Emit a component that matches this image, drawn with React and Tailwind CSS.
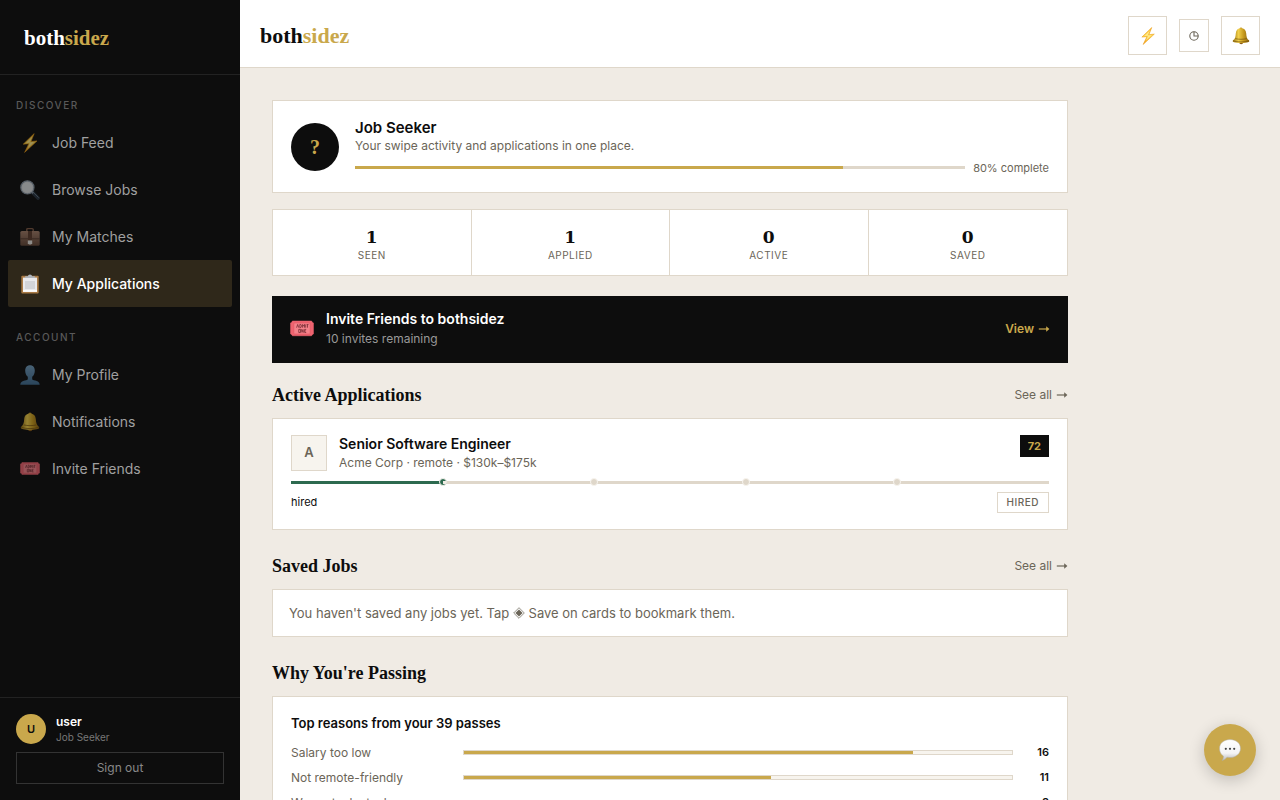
import React from "react";

function Bolt({ className }) {
  return (
    <svg viewBox="0 0 20 20" className={className} aria-hidden="true">
      <defs>
        <linearGradient id="bolt" x1="0" y1="0" x2="0" y2="1">
          <stop offset="0" stopColor="#ffb81c" />
          <stop offset="0.5" stopColor="#ffd84d" />
          <stop offset="1" stopColor="#f59a12" />
        </linearGradient>
      </defs>
      <path d="M14.2.6 3.2 11.2l5.600-.5L4.600 19.400 17 7.900l-6 .6z" fill="url(#bolt)" stroke="#e89a17" strokeWidth=".6" strokeLinejoin="round" />
      <path d="M12.400 3.400 6 10l4.200-.4-2.600 5.800L14 9l-4.400.4z" fill="#fff0a0" opacity=".75" />
    </svg>
  );
}

function Magnifier({ className }) {
  return (
    <svg viewBox="0 0 20 20" className={className} aria-hidden="true">
      <path d="m12.200 12.200 5.800 5.800" stroke="#26323e" strokeWidth="3.800" strokeLinecap="round" />
      <path d="m13.600 12.700 4.700 4.600" stroke="#60707f" strokeWidth="1" strokeLinecap="round" />
      <path d="m11.600 11.600 1.600 1.600" stroke="#8794a3" strokeWidth="2" />
      <circle cx="7.400" cy="7.400" r="6.600" fill="#d0d4d7" stroke="#8694a1" strokeWidth="1.200" />
      <circle cx="7.400" cy="7.400" r="5" fill="#dfe2e4" opacity=".6" />
    </svg>
  );
}

function Briefcase({ className }) {
  return (
    <svg viewBox="0 0 20 20" className={className} aria-hidden="true">
      <defs>
        <linearGradient id="case" x1="0" y1="0" x2="0" y2="1">
          <stop offset="0" stopColor="#a27d68" />
          <stop offset="1" stopColor="#634637" />
        </linearGradient>
      </defs>
      <path d="M6.800 4.500V2.600q0-1 1-1h4.400q1 0 1 1v1.900" fill="none" stroke="#805a46" strokeWidth="1.400" />
      <rect x=".3" y="4" width="19.400" height="14.800" rx="1.600" fill="url(#case)" />
      <path d="M.3 11.800h19.400" stroke="#4b3328" strokeWidth=".8" />
      <rect x="8" y="4" width="4" height="9" fill="#5c3d2e" />
      <path d="M7.800 13.600h4.400v2.700L11 17.600H9l-1.200-1.300z" fill="#e5e1dc" />
    </svg>
  );
}

function Clipboard({ className }) {
  return (
    <svg viewBox="0 0 20 20" className={className} aria-hidden="true">
      <rect x="1.300" y="1.800" width="17.400" height="17.800" rx="1" fill="#a97a45" />
      <path d="M3 3.600h14v14.200H3z" fill="#e9e9ec" />
      <path d="M5 7h10v8H5z" fill="#d3d4d8" />
      <path d="M3 16.200h14v1.600H3z" fill="#ffffff" />
      <path d="M5.200 3.900V2.300h2.600Q8.200.4 10 .4t2.200 1.900h2.600v1.600z" fill="#aeb4bc" />
    </svg>
  );
}

function Person({ className }) {
  return (
    <svg viewBox="0 0 20 20" className={className} aria-hidden="true">
      <defs>
        <linearGradient id="person" x1="0" y1="0" x2="0" y2="1">
          <stop offset="0" stopColor="#6f9abb" />
          <stop offset="1" stopColor="#3f6b8f" />
        </linearGradient>
      </defs>
      <path d="M10 .3C6.900.3 5.200 2.500 5.200 5.800c0 2.600 1 4.800 2.600 6v2.100c0 .7-.6 1-1.700 1.300C2.900 16 .5 16.500.3 19.700h19.400c-.2-3.200-2.600-3.700-5.800-4.500-1.100-.3-1.700-.6-1.700-1.300v-2.100c1.600-1.200 2.600-3.400 2.600-6C14.800 2.500 13.100.3 10 .3z" fill="url(#person)" />
    </svg>
  );
}

function Bell({ className }) {
  return (
    <svg viewBox="0 0 20 20" className={className} aria-hidden="true">
      <defs>
        <linearGradient id="bell" x1="0" y1="0" x2="1" y2="0">
          <stop offset="0" stopColor="#9a7410" />
          <stop offset="0.35" stopColor="#f1cf4a" />
          <stop offset="0.65" stopColor="#c79a1d" />
          <stop offset="1" stopColor="#8a620d" />
        </linearGradient>
      </defs>
      <circle cx="10" cy="2" r="1.500" fill="#c5982a" />
      <circle cx="10.200" cy="17" r="2.200" fill="#8c5c14" />
      <path d="M10 1.500c-3.500 0-5.600 2.200-5.800 5.600-.2 3.800-.8 5.900-3 7.700-.6.600-.6 1.500.3 1.900 4.600 1.400 12.400 1.400 17 0 .9-.4.900-1.300.3-1.900-2.200-1.800-2.800-3.900-3-7.700C15.600 3.700 13.500 1.500 10 1.500z" fill="url(#bell)" />
      <path d="M1.300 15.400c4.900 1.600 12.500 1.600 17.400 0M3.600 12.900c4 1 8.800 1 12.800 0" fill="none" stroke="#6e4c0b" strokeWidth=".7" />
    </svg>
  );
}

function Ticket({ className }) {
  return (
    <svg viewBox="0 0 20 20" className={className} aria-hidden="true">
      <path d="M2 3.400h16q.2 1.200 1.500 1.500v9.200q-1.300.3-1.500 1.500H2q-.2-1.200-1.500-1.500V4.900Q1.800 4.600 2 3.400z" fill="#ef6470" stroke="#ef6470" strokeWidth=".5" strokeLinejoin="round" />
      <rect x="3.200" y="5" width="13.600" height="9.200" rx=".6" fill="#f5828a" stroke="#e25563" strokeWidth=".5" />
      <path d="m5.500 8.900.9-2.700.9 2.700m.9-2.700v2.600h.8l.5-.6V6.800l-.5-.6zm2.300 2.700V6.200l.8 1.400.8-1.400v2.700m1-2.700v2.700m.8-2.600h1.500m-.8 0v2.600M7.300 10.300h1.500v2.600H7.300zm2.500 2.600v-2.600l1.200 2.600v-2.600m2.500 0h-1.300v2.600h1.300m-1.300-1.300h1" fill="none" stroke="#7c3038" strokeWidth=".7" />
    </svg>
  );
}

function Speech({ className }) {
  return (
    <svg viewBox="0 0 22 22" className={className} aria-hidden="true">
      <defs>
        <linearGradient id="speech" x1="0" y1="0" x2="0" y2="1">
          <stop offset="0" stopColor="#ffffff" />
          <stop offset="0.65" stopColor="#f4f4f4" />
          <stop offset="1" stopColor="#b9b9bb" />
        </linearGradient>
      </defs>
      <path d="M11 .6c6 0 10.500 3.600 10.500 8.800S17 18.500 11 18.500c-1 0-2-.1-3-.3-1 1.400-2.800 2.900-4.900 3.300 1-1.300 1.500-2.900 1.300-4.400C2 15.500.5 12.800.5 9.400.5 4.200 5 .6 11 .6z" fill="url(#speech)" stroke="#b3aea2" strokeWidth=".5" />
      <circle cx="6.800" cy="9.800" r="1.100" fill="#444" />
      <circle cx="11" cy="9.800" r="1.100" fill="#444" />
      <circle cx="15.200" cy="9.800" r="1.100" fill="#444" />
    </svg>
  );
}

function ClockGlyph({ className }) {
  return (
    <svg viewBox="0 0 10 10" className={className} fill="none" stroke="currentColor" strokeWidth="1.100" aria-hidden="true">
      <circle cx="5" cy="5" r="4.200" />
      <path d="M5 .8V5h4.200" />
    </svg>
  );
}

function Diamond() {
  return (
    <svg viewBox="0 0 12 12" className="inline-block size-3 align-[-1px]" aria-hidden="true">
      <path d="M6 .7 11.300 6 6 11.300.7 6z" fill="none" stroke="currentColor" strokeWidth=".7" />
      <path d="M6 2.400 9.600 6 6 9.600 2.400 6z" fill="currentColor" />
    </svg>
  );
}

function Arrow() {
  return (
    <svg viewBox="0 0 12 8" className="h-2 w-3" aria-hidden="true">
      <path d="M.8 4h8.400" fill="none" stroke="currentColor" strokeWidth="1.200" />
      <path d="M8.200 1.200 11.400 4 8.200 6.800z" fill="currentColor" />
    </svg>
  );
}

function Logo({ className }) {
  return (
    <a href="#home" className={`font-['Liberation_Serif',serif] font-bold ${className}`}>
      both<span className="text-[#c9a84c]">sidez</span>
    </a>
  );
}

function NavGroup({ title, items }) {
  return (
    <div>
      <h2 className="px-4 text-[10px] leading-4 font-medium tracking-[1.5px] text-[#595959] uppercase">{title}</h2>
      <ul className="mt-[6px] px-2">
        {items.map(({ label, Icon, active }) => (
          <li key={label}>
            <a
              href={`#${label}`}
              aria-current={active ? "page" : undefined}
              className={
                active
                  ? "flex h-[47px] items-center gap-3 rounded-xs bg-[#2f281a] px-3 text-sm font-medium text-white"
                  : "flex h-[47px] items-center gap-3 rounded-xs px-3 text-sm text-[#a0a0a0]"
              }
            >
              <Icon className={active ? "size-5" : "size-5 opacity-60"} />
              {label}
            </a>
          </li>
        ))}
      </ul>
    </div>
  );
}

const discover = [
  { label: "Job Feed", Icon: Bolt },
  { label: "Browse Jobs", Icon: Magnifier },
  { label: "My Matches", Icon: Briefcase },
  { label: "My Applications", Icon: Clipboard, active: true },
];

const account = [
  { label: "My Profile", Icon: Person },
  { label: "Notifications", Icon: Bell },
  { label: "Invite Friends", Icon: Ticket },
];

function Sidebar() {
  return (
    <aside className="flex w-60 shrink-0 flex-col bg-[#0d0d0d]">
      <div className="flex h-[75px] items-center border-b border-[#222] px-6 pt-1">
        <Logo className="text-[21px] text-white" />
      </div>
      <nav className="flex grow flex-col gap-[22px] pt-[22px]">
        <NavGroup title="Discover" items={discover} />
        <NavGroup title="Account" items={account} />
      </nav>
      <div className="border-t border-[#222] p-4">
        <div className="flex items-center gap-[10px]">
          <div className="flex size-[30px] items-center justify-center rounded-full bg-[#c9a84c] text-[11px] font-semibold text-[#0d0d0d]">U</div>
          <div>
            <p className="text-xs leading-4 font-semibold text-white">user</p>
            <p className="text-[10px] leading-[14px] text-[#777]">Job Seeker</p>
          </div>
        </div>
        <button type="button" className="mt-2 h-8 w-full border border-[#333] text-xs text-[#888]">
          Sign out
        </button>
      </div>
    </aside>
  );
}

const stats = [
  ["1", "Seen"],
  ["1", "Applied"],
  ["0", "Active"],
  ["0", "Saved"],
];

const reasons = [
  { label: "Salary too low", count: 16, share: 82 },
  { label: "Not remote-friendly", count: 11, share: 56 },
  { label: "Wrong tech stack", count: 8, share: 41 },
];

function SectionHead({ title, link }) {
  return (
    <div className="mb-[10px] flex h-[26px] items-center justify-between">
      <h2 className="font-['Liberation_Serif',serif] text-lg font-bold">{title}</h2>
      {link && (
        <a href="#all" className="flex items-center gap-1 text-xs text-[#6b6558]">
          See all <Arrow />
        </a>
      )}
    </div>
  );
}

export default function App() {
  return (
    <div className="flex h-screen overflow-hidden bg-[#f0ebe4] font-['Inter',sans-serif] text-[#0d0d0d]">
      <Sidebar />
      <div className="flex min-w-0 grow flex-col">
        <header className="flex h-[68px] shrink-0 items-center justify-between border-b border-[#dfd7ca] bg-white px-5 pt-1">
          <Logo className="text-[22px] text-[#0d0d0d]" />
          <div className="flex items-center gap-3">
            <button type="button" aria-label="Job feed" className="flex size-[39px] items-center justify-center border border-[#dfd7ca]">
              <Bolt className="size-[18px]" />
            </button>
            <button type="button" aria-label="History" className="flex h-[33px] w-[30px] items-center justify-center border border-[#dfd7ca] text-[#6b6558]">
              <ClockGlyph className="size-[10px]" />
            </button>
            <button type="button" aria-label="Notifications" className="flex size-[39px] items-center justify-center border border-[#dfd7ca]">
              <Bell className="size-[18px]" />
            </button>
          </div>
        </header>

        <main className="min-h-0 grow overflow-y-auto [scrollbar-width:none]">
          <div className="max-w-[860px] p-8">
            <section className="flex h-[93px] items-center gap-4 border border-[#dfd7ca] bg-white px-[18px]">
              <div className="flex size-12 shrink-0 items-center justify-center rounded-full bg-[#0d0d0d] font-['Liberation_Serif',serif] text-xl font-bold text-[#c9a84c]">?</div>
              <div className="grow">
                <h1 className="text-[15px] leading-5 font-semibold">Job Seeker</h1>
                <p className="text-xs leading-4 text-[#6b6558]">Your swipe activity and applications in one place.</p>
                <div className="mt-[6px] flex items-center gap-2">
                  <div className="h-[3px] grow bg-[#dfd7ca]">
                    <div className="h-full w-4/5 bg-[#c9a84c]" />
                  </div>
                  <span className="text-[11px] leading-4 text-[#6b6558]">80% complete</span>
                </div>
              </div>
            </section>

            <section className="mt-4 grid grid-cols-4 divide-x divide-[#dfd7ca] border border-[#dfd7ca] bg-white">
              {stats.map(([value, label]) => (
                <div key={label} className="flex h-[65px] flex-col items-center justify-center pt-1">
                  <span className="font-['DejaVu_Serif',serif] text-[17px] leading-5 font-bold">{value}</span>
                  <span className="text-[10px] leading-4 tracking-wider text-[#6b6558] uppercase">{label}</span>
                </div>
              ))}
            </section>

            <section className="mt-5 flex h-[67px] items-center gap-3 bg-[#0d0d0d] px-[18px] pb-[2px]">
              <Ticket className="size-6" />
              <div className="grow">
                <h2 className="text-sm leading-5 font-semibold text-white">Invite Friends to bothsidez</h2>
                <p className="text-xs leading-5 text-[#999]">10 invites remaining</p>
              </div>
              <a href="#invites" className="flex items-center gap-1 text-xs font-semibold text-[#c9a84c]">
                View <Arrow />
              </a>
            </section>

            <section className="mt-[19px]">
              <SectionHead title="Active Applications" link />
              <article className="h-28 border border-[#dfd7ca] bg-white px-[18px] py-4">
                <div className="flex items-start gap-3">
                  <div className="flex size-9 shrink-0 items-center justify-center border border-[#dfd7ca] bg-[#f7f4ee] text-[13px] font-semibold text-[#6b6558]">A</div>
                  <div className="h-9 grow">
                    <h3 className="text-sm leading-[18px] font-semibold">Senior Software Engineer</h3>
                    <p className="text-xs leading-5 text-[#6b6558]">Acme Corp · remote · $130k–$175k</p>
                  </div>
                  <span className="bg-[#0d0d0d] px-2 text-[11px] leading-[22px] font-bold text-[#c9a84c]">72</span>
                </div>
                <div className="mt-[10px] flex">
                  {[0, 1, 2, 3, 4].map((step) => (
                    <div key={step} className={step === 0 ? "relative h-[3px] grow bg-[#2d6a4f]" : "relative h-[3px] grow bg-[#dfd7ca]"}>
                      {step < 4 && (
                        <span
                          className={
                            step === 0
                              ? "absolute -top-[3px] -right-1 z-10 size-2 rounded-full border border-[#f7f4ee] bg-[#2d6a4f]"
                              : "absolute -top-[3px] -right-1 z-10 size-2 rounded-full border border-[#f7f4ee] bg-[#dfd7ca]"
                          }
                        >
                          {step === 0 && <span className="absolute top-[2px] right-0 h-[3px] w-[3px] bg-[#f0ebe4]" />}
                        </span>
                      )}
                    </div>
                  ))}
                </div>
                <div className="mt-2 flex items-center justify-between">
                  <span className="text-[11px]">hired</span>
                  <span className="border border-[#dfd7ca] px-[9px] text-[10px] leading-[19px] font-medium tracking-wider text-[#6b6558]">HIRED</span>
                </div>
              </article>
            </section>

            <section className="mt-[23px]">
              <SectionHead title="Saved Jobs" link />
              <p className="border border-[#dfd7ca] bg-white px-4 py-[13px] text-[13px] leading-5 text-[#6b6558]">
                You haven't saved any jobs yet. Tap <Diamond /> Save on cards to bookmark them.
              </p>
            </section>

            <section className="mt-[23px]">
              <SectionHead title="Why You're Passing" />
              <div className="border border-[#dfd7ca] bg-white px-[18px] py-4">
                <h3 className="text-[13px] leading-5 font-semibold">Top reasons from your 39 passes</h3>
                <ul className="mt-[7px]">
                  {reasons.map(({ label, count, share }) => (
                    <li key={label} className="flex h-[25px] items-center gap-3">
                      <span className="w-40 shrink-0 text-xs text-[#6b6558]">{label}</span>
                      <div className="h-[5px] grow border border-[#dfd7ca] bg-[#f7f4ee]">
                        <div className="h-full bg-[#c9a84c]" style={{ width: `${share}%` }} />
                      </div>
                      <span className="w-6 text-right text-[11px] font-semibold">{count}</span>
                    </li>
                  ))}
                </ul>
              </div>
            </section>
          </div>
        </main>
      </div>

      <button
        type="button"
        aria-label="Open chat"
        className="fixed right-6 bottom-6 flex size-[52px] items-center justify-center rounded-full bg-[#c9a84c] shadow-[0_4px_16px_rgba(0,0,0,0.2)]"
      >
        <Speech className="size-[22px]" />
      </button>
    </div>
  );
}
